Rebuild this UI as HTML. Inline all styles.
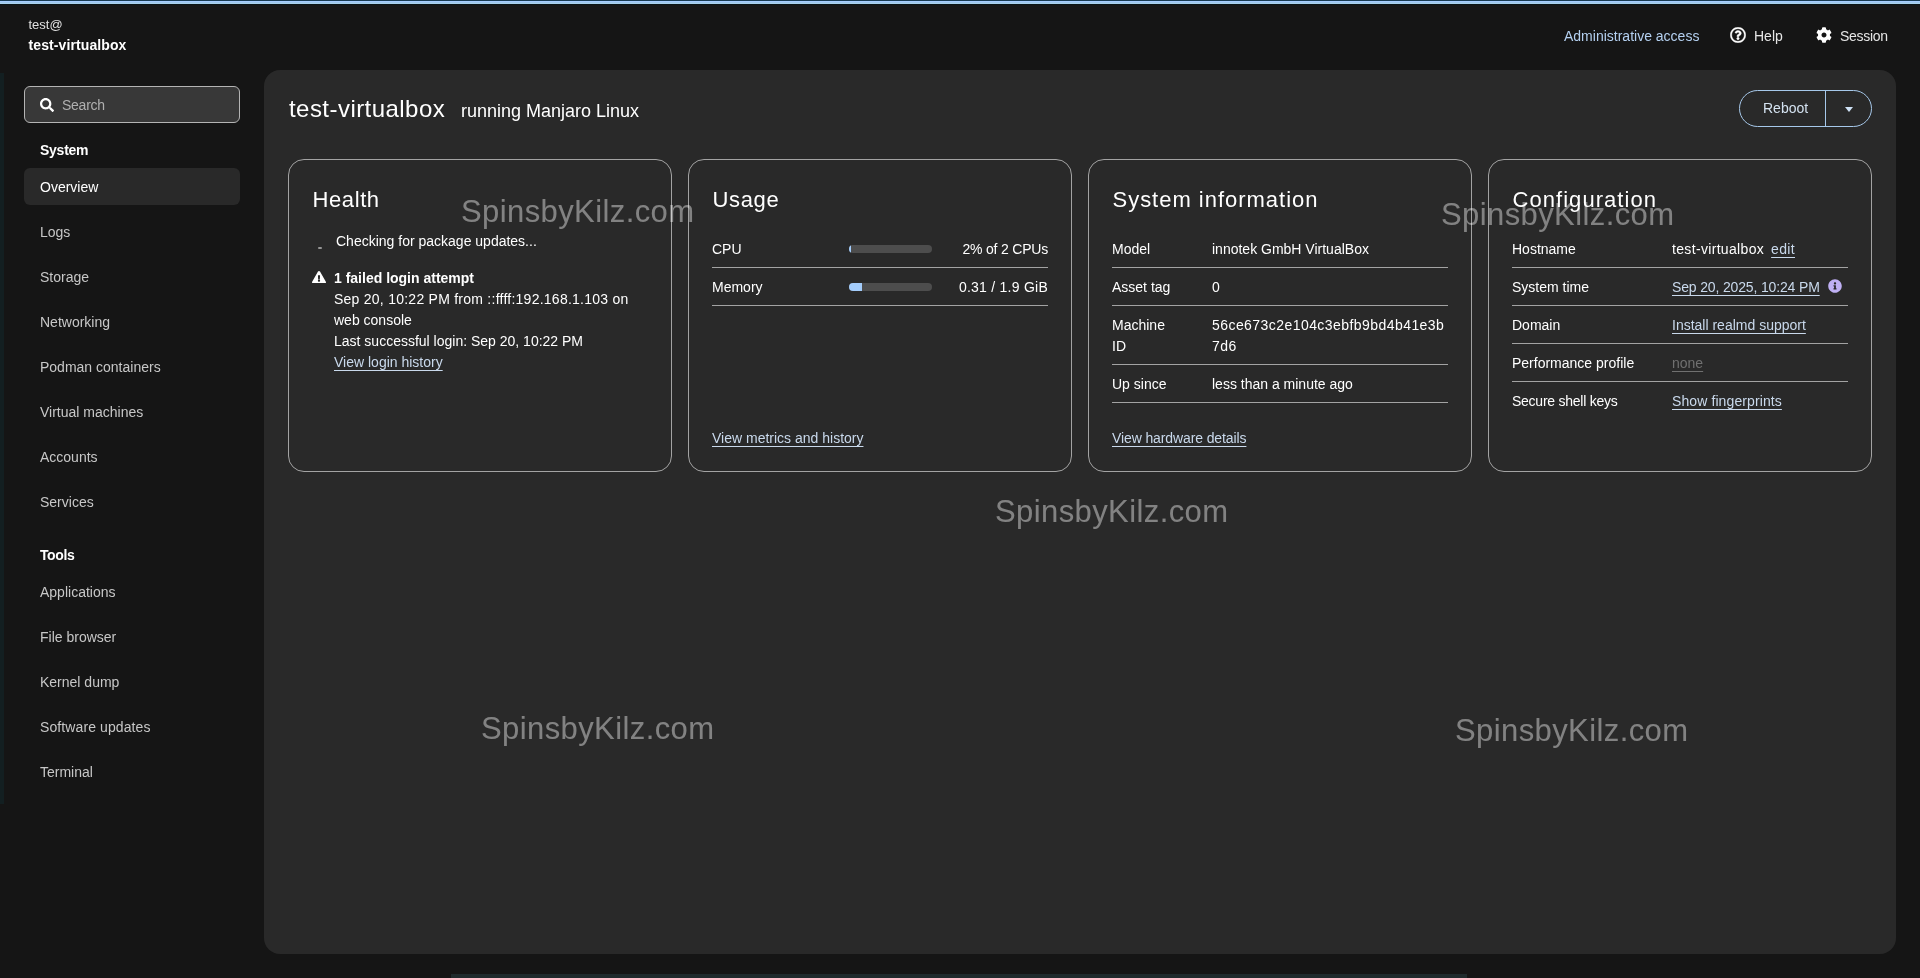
<!DOCTYPE html>
<html lang="en">
<head>
<meta charset="utf-8">
<title>Overview - test@test-virtualbox</title>
<style>
*{box-sizing:border-box;margin:0;padding:0}
html,body{width:1920px;height:978px;overflow:hidden;background:#151515}
body{position:relative;font-family:"Liberation Sans",sans-serif;font-size:14px;color:#e6e6e6;line-height:21px}
a{color:#c9d9ec;text-decoration:underline;text-underline-offset:3px;text-decoration-thickness:1px}
#wrap{position:absolute;left:0;top:0;width:1920px;height:978px;will-change:transform}
.abs{position:absolute;white-space:nowrap}
/* top stripes */
#stripe0{position:absolute;left:0;top:0;width:1920px;height:1px;background:#183b53}
#stripe1{position:absolute;left:0;top:1px;width:1920px;height:4px;background:linear-gradient(#a6cdff 0,#a6cdff 1px,#9fc8ec 1px,#9fc8ec 2px,#a8d0ec 2px,#a8d0ec 3px,#0a1414 3px,#0a1414 4px)}
#lstrip{position:absolute;left:0;top:73px;width:3.500px;height:731px;background:#131f21}
#bstrip{position:absolute;left:451px;top:974px;width:1016px;height:4px;background:#1f2a2c}
/* masthead */
#user{left:28.5px;top:14px;font-size:13px;color:#e0e0e0}
#host{left:28.5px;top:35px;font-size:14px;font-weight:bold;color:#fff;letter-spacing:.1px}
.top{top:26px;font-size:14px;color:#e6e6e6}
/* sidebar */
#search{position:absolute;left:24px;top:86px;width:216px;height:37px;border:1px solid #b4b4b4;border-radius:6px;background:#383838}
#search span{position:absolute;left:37px;top:8px;color:#b0b0b0;font-size:14px;letter-spacing:-.25px}
#search svg{position:absolute;left:15px;top:11px}
.navh{left:40px;font-weight:bold;color:#fff;font-size:14px}
.nav{left:40px;color:#c7c7c7;font-size:14px}
#cur{position:absolute;left:24px;top:168px;width:216px;height:37px;border-radius:6px;background:#292929}
/* main */
#main{position:absolute;left:264px;top:70px;width:1632px;height:884px;border-radius:16px;background:#292929}
#title{left:289px;top:91px;font-size:24px;line-height:36px;color:#fff;letter-spacing:.45px}
#sub{left:461px;top:96px;font-size:18px;line-height:30px;color:#fff}
#reboot{position:absolute;left:1739px;top:90px;width:133px;height:37px;border:1px solid #a6c8ea;border-radius:19px}
#reboot i{position:absolute;left:85px;top:0;width:1px;height:35px;background:#a6c8ea}
#reboot span{position:absolute;left:23px;top:7px;color:#d4e2f0;font-size:14px}
#reboot b{position:absolute;left:105px;top:15.500px;width:0;height:0;border-left:4.5px solid transparent;border-right:4.5px solid transparent;border-top:5.5px solid #cfe2f6}
.card{position:absolute;top:159px;width:384px;height:313px;border:1px solid #a3a3a3;border-radius:16px}
.card h2{position:absolute;left:23.5px;top:24px;font-size:22px;line-height:32px;letter-spacing:.6px;font-weight:normal;color:#fff;white-space:nowrap}
.row{position:absolute;left:23px;width:336px;height:38px;border-bottom:1px solid #a3a3a3}
.row.nb{border-bottom:none}
.row .k{position:absolute;left:0;top:9px;color:#fff;white-space:nowrap}
.row .v{position:absolute;top:9px;color:#fff;white-space:nowrap}
.bar{position:absolute;left:137px;top:15px;width:83px;height:8px;border-radius:4px;background:#4d4d4d;overflow:hidden}
.bar i{display:block;height:8px;background:#a3ccfb}
.wm{position:absolute;white-space:nowrap;font-size:31px;line-height:36px;color:rgba(255,255,255,.42);letter-spacing:.4px;pointer-events:none}
</style>
</head>
<body>
<div id="wrap">
<div id="stripe0"></div><div id="stripe1"></div><div id="lstrip"></div><div id="bstrip"></div>

<div id="user" class="abs">test@</div>
<div id="host" class="abs">test-virtualbox</div>

<a class="abs top" style="left:1564px;color:#b4d0f0;text-decoration:none">Administrative access</a>
<svg class="abs" style="left:1730px;top:27px" width="16" height="16" viewBox="0 0 512 512"><path fill="#fff" stroke="#fff" stroke-width="12" d="M256 8C119.043 8 8 119.083 8 256c0 136.997 111.043 248 248 248s248-111.003 248-248C504 119.083 392.957 8 256 8zm0 448c-110.532 0-200-89.431-200-200 0-110.495 89.472-200 200-200 110.491 0 200 89.471 200 200 0 110.530-89.431 200-200 200zm107.244-255.200c0 67.052-72.421 68.084-72.421 92.863V300c0 6.627-5.373 12-12 12h-45.647c-6.627 0-12-5.373-12-12v-8.659c0-35.745 27.100-50.034 47.579-61.516 17.561-9.845 28.324-16.541 28.324-29.579 0-17.246-21.999-28.693-39.784-28.693-23.189 0-33.894 10.977-48.942 29.969-4.057 5.120-11.460 6.071-16.666 2.124l-27.824-21.098c-5.107-3.872-6.251-11.066-2.644-16.363C184.846 131.491 214.940 112 261.794 112c49.071 0 101.450 38.304 101.450 88.800zM298 368c0 23.159-18.841 42-42 42s-42-18.841-42-42 18.841-42 42-42 42 18.841 42 42z"/></svg>
<div class="abs top" style="left:1754px">Help</div>
<svg class="abs" style="left:1816px;top:27px" width="16" height="16" viewBox="0 0 512 512"><path fill="#fff" d="M487.400 315.700l-42.600-24.600c4.300-23.200 4.300-47 0-70.200l42.600-24.600c4.900-2.800 7.100-8.600 5.500-14-11.100-35.600-30-67.800-54.700-94.600-3.800-4.100-10-5.100-14.800-2.300L380.800 110c-17.900-15.400-38.500-27.300-60.800-35.100V25.800c0-5.600-3.900-10.500-9.400-11.700-36.700-8.200-74.300-7.800-109.200 0-5.500 1.200-9.400 6.100-9.400 11.700V75c-22.200 7.900-42.800 19.800-60.800 35.100L88.700 85.500c-4.900-2.800-11-1.900-14.800 2.300-24.700 26.700-43.600 58.900-54.700 94.600-1.700 5.400.6 11.200 5.500 14L67.300 221c-4.300 23.200-4.300 47 0 70.200l-42.600 24.600c-4.900 2.800-7.100 8.600-5.500 14 11.100 35.600 30 67.800 54.700 94.600 3.800 4.100 10 5.100 14.800 2.300l42.600-24.600c17.900 15.400 38.500 27.300 60.800 35.100v49.200c0 5.600 3.900 10.500 9.400 11.700 36.700 8.200 74.300 7.800 109.200 0 5.500-1.200 9.400-6.100 9.400-11.700v-49.200c22.200-7.900 42.800-19.800 60.800-35.100l42.600 24.600c4.900 2.800 11 1.900 14.800-2.300 24.700-26.700 43.600-58.900 54.700-94.600 1.500-5.500-.7-11.300-5.600-14.100zM256 336c-44.100 0-80-35.900-80-80s35.900-80 80-80 80 35.900 80 80-35.900 80-80 80z"/></svg>
<div class="abs top" style="left:1840px;letter-spacing:-.3px">Session</div>

<!-- sidebar -->
<div id="search"><svg width="14" height="14" viewBox="0 0 512 512"><path fill="#fff" d="M505 442.700L405.300 343c-4.500-4.500-10.600-7-17-7H372c27.600-35.300 44-79.700 44-128C416 93.100 322.900 0 208 0S0 93.100 0 208s93.100 208 208 208c48.300 0 92.700-16.400 128-44v16.300c0 6.400 2.500 12.500 7 17l99.700 99.700c9.400 9.400 24.600 9.400 33.900 0l28.300-28.300c9.400-9.400 9.400-24.600.1-34zM208 336c-70.700 0-128-57.200-128-128 0-70.700 57.200-128 128-128 70.700 0 128 57.200 128 128 0 70.700-57.200 128-128 128z"/></svg><span>Search</span></div>
<div class="abs navh" style="top:140px;letter-spacing:-.25px">System</div>
<div id="cur"></div>
<div class="abs nav" style="top:177px;color:#fff">Overview</div>
<div class="abs nav" style="top:222px">Logs</div>
<div class="abs nav" style="top:267px">Storage</div>
<div class="abs nav" style="top:312px">Networking</div>
<div class="abs nav" style="top:357px">Podman containers</div>
<div class="abs nav" style="top:402px">Virtual machines</div>
<div class="abs nav" style="top:447px">Accounts</div>
<div class="abs nav" style="top:492px">Services</div>
<div class="abs navh" style="top:545px;letter-spacing:-.4px">Tools</div>
<div class="abs nav" style="top:582px">Applications</div>
<div class="abs nav" style="top:627px">File browser</div>
<div class="abs nav" style="top:672px">Kernel dump</div>
<div class="abs nav" style="top:717px;letter-spacing:.1px">Software updates</div>
<div class="abs nav" style="top:762px">Terminal</div>

<!-- main -->
<div id="main"></div>
<div id="title" class="abs">test-virtualbox</div>
<div id="sub" class="abs">running Manjaro Linux</div>
<div id="reboot"><span>Reboot</span><i></i><b></b></div>

<!-- Health -->
<div class="card" style="left:288px">
  <h2>Health</h2>
  <div class="abs" style="left:28.5px;top:87px;width:4.5px;height:2px;border-radius:1px;background:#969696"></div>
  <div class="abs" style="left:47px;top:71px;color:#fff">Checking for package updates...</div>
  <svg class="abs" style="left:23px;top:111px" width="14" height="12.440" viewBox="0 0 576 512"><path fill="#fff" d="M569.500 440C588 472 564.800 512 527.900 512H48.100c-36.900 0-60-40.100-41.600-72L246.400 24c18.500-32 64.700-32 83.200 0l239.900 416zM288 354c-25.400 0-46 20.600-46 46s20.600 46 46 46 46-20.600 46-46-20.600-46-46-46zm-43.700-165.300l7.400 136c.3 6.400 5.600 11.300 12 11.300h48.500c6.400 0 11.600-5 12-11.300l7.400-136c.4-6.900-5.100-12.700-12-12.700h-63.400c-6.900 0-12.400 5.800-12 12.700z"/></svg>
  <div class="abs" style="left:45px;top:108px;color:#fff;font-weight:bold">1 failed login attempt</div>
  <div class="abs" style="left:45px;top:129px;color:#fff;letter-spacing:.25px">Sep 20, 10:22 PM from ::ffff:192.168.1.103 on</div>
  <div class="abs" style="left:45px;top:150px;color:#fff">web console</div>
  <div class="abs" style="left:45px;top:171px;color:#fff">Last successful login: Sep 20, 10:22 PM</div>
  <a class="abs" style="left:45px;top:192px">View login history</a>
</div>

<!-- Usage -->
<div class="card" style="left:688px">
  <h2 style="letter-spacing:.66px">Usage</h2>
  <div class="row" style="top:70px"><span class="k">CPU</span><div class="bar"><i style="width:1.700px"></i></div><span class="v" style="right:0;letter-spacing:-.2px">2% of 2 CPUs</span></div>
  <div class="row" style="top:108px"><span class="k">Memory</span><div class="bar"><i style="width:13px"></i></div><span class="v" style="right:0;letter-spacing:.25px">0.31 / 1.9 GiB</span></div>
  <a class="abs" style="left:23px;top:268px">View metrics and history</a>
</div>

<!-- System information -->
<div class="card" style="left:1088px">
  <h2 style="letter-spacing:.98px">System information</h2>
  <div class="row" style="top:70px"><span class="k">Model</span><span class="v" style="left:100px">innotek GmbH VirtualBox</span></div>
  <div class="row" style="top:108px"><span class="k">Asset tag</span><span class="v" style="left:100px">0</span></div>
  <div class="row" style="top:146px;height:59px"><span class="k">Machine<br>ID</span><span class="v" style="left:100px;letter-spacing:.44px">56ce673c2e104c3ebfb9bd4b41e3b<br>7d6</span></div>
  <div class="row" style="top:205px"><span class="k">Up since</span><span class="v" style="left:100px">less than a minute ago</span></div>
  <a class="abs" style="left:23px;top:268px;letter-spacing:-.11px">View hardware details</a>
</div>

<!-- Configuration -->
<div class="card" style="left:1488px">
  <h2 style="letter-spacing:1.050px">Configuration</h2>
  <div class="row" style="top:70px"><span class="k">Hostname</span><span class="v" style="left:160px;letter-spacing:.33px">test-virtualbox<a style="margin-left:7px">edit</a></span></div>
  <div class="row" style="top:108px"><span class="k">System time</span><span class="v" style="left:160px"><a style="letter-spacing:-.15px">Sep 20, 2025, 10:24 PM</a></span>
    <svg class="abs" style="left:316px;top:11px" width="14" height="14" viewBox="0 0 512 512"><path fill="#bfb0f4" d="M256 8C119 8 8 119.100 8 256c0 137 111 248 248 248s248-111 248-248C504 119.100 393 8 256 8zm0 110c23.200 0 42 18.800 42 42s-18.800 42-42 42-42-18.800-42-42 18.800-42 42-42zm56 254c0 6.600-5.400 12-12 12h-88c-6.600 0-12-5.400-12-12v-24c0-6.600 5.400-12 12-12h12v-64h-12c-6.600 0-12-5.400-12-12v-24c0-6.600 5.400-12 12-12h64c6.600 0 12 5.400 12 12v100h12c6.600 0 12 5.400 12 12v24z"/></svg></div>
  <div class="row" style="top:146px"><span class="k">Domain</span><span class="v" style="left:160px"><a>Install realmd support</a></span></div>
  <div class="row" style="top:184px"><span class="k">Performance profile</span><span class="v" style="left:160px"><a style="color:#707070">none</a></span></div>
  <div class="row nb" style="top:222px"><span class="k" style="letter-spacing:-.25px">Secure shell keys</span><span class="v" style="left:160px"><a style="letter-spacing:.1px">Show fingerprints</a></span></div>
</div>

<!-- watermarks -->
<div class="wm" style="left:461px;top:194px">SpinsbyKilz.com</div>
<div class="wm" style="left:1441px;top:197px">SpinsbyKilz.com</div>
<div class="wm" style="left:995px;top:494px">SpinsbyKilz.com</div>
<div class="wm" style="left:481px;top:711px">SpinsbyKilz.com</div>
<div class="wm" style="left:1455px;top:713px">SpinsbyKilz.com</div>
</div>
</body>
</html>
